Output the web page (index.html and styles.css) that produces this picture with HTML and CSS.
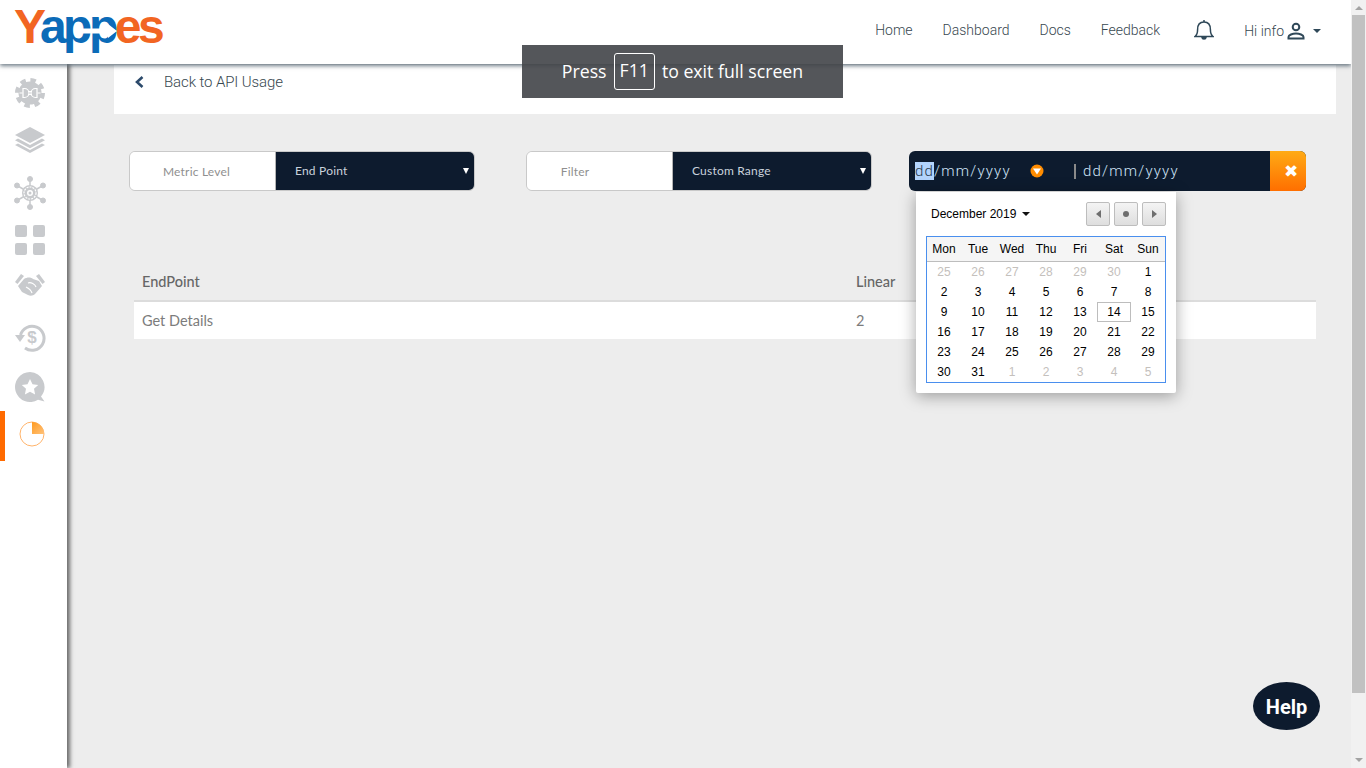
FILE: index.html
```html
<!DOCTYPE html>
<html lang="en">
<head>
    <meta charset="UTF-8">
    <title>Yappes - API Usage</title>
    <link rel="stylesheet" href="styles.css">
</head>
<body>
    <div class="page">
        <!-- Top Navigation -->
        <header class="topbar">
            <a class="logo">
                <span class="logo-y">Y</span><span class="logo-app">app</span><span class="logo-es">es</span>
                <svg class="logo-arrow" width="46" height="14" viewBox="0 0 46 14">
                    <path d="M0 4.500h34V0l9 7-9 7V9.500H0z" fill="#fff"/>
                </svg>
            </a>
            <nav class="topnav">
                <a>Home</a>
                <a>Dashboard</a>
                <a>Docs</a>
                <a>Feedback</a>
            </nav>
            <svg class="bell" width="20" height="22" viewBox="0 0 20 22" fill="none" stroke="#2f4858" stroke-width="1.5">
                <path d="M1 17.500c2-1.500 2.600-3.500 2.600-7C3.600 6 6 3 10 3s6.400 3 6.400 7.500c0 3.500.6 5.500 2.600 7z"/>
                <path d="M10 1v2"/>
                <path d="M8 18.500c.2 2 3.800 2 4 0z" fill="#2f4858"/>
            </svg>
            <div class="user-menu">
                <span>Hi info</span>
                <svg width="20" height="18" viewBox="0 0 20 18" fill="none" stroke="#2f4858" stroke-width="2">
                    <circle cx="10" cy="5" r="3.300"/>
                    <path d="M2.500 16.500v-1.500c0-2 4-3.500 7.500-3.500s7.500 1.500 7.500 3.500v1.500z"/>
                </svg>
                <i class="caret"></i>
            </div>
        </header>

        <div class="body-row">
            <!-- Sidebar -->
            <aside class="sidebar">
                <div class="side-item h-gear">
                    <svg width="30" height="30" viewBox="0 0 30 30">
                        <circle cx="15" cy="15" r="11.500" fill="#c8cacd"/>
                        <circle cx="15" cy="15" r="12.500" fill="none" stroke="#c8cacd" stroke-width="5" stroke-dasharray="5.300 4.520"/>
                        <path d="M4.500 15h3M22.500 15h3M13 13.500h4M13 16.500h4" stroke="#fff" stroke-width="1.200" fill="none"/>
                        <path d="M8 10.500h1.500a4.500 4.500 0 0 1 0 9H8zM22 10.500h-1.500a4.500 4.500 0 0 0 0 9H22z" fill="none" stroke="#fff" stroke-width="1.200"/>
                    </svg>
                </div>
                <div class="side-item h-layers">
                    <svg width="30" height="26" viewBox="0 0 30 26" fill="#c8cacd">
                        <path d="M15 0l15 8-15 8L0 8z"/>
                        <path d="M3 11.500l12 6.500 12-6.500 3 1.800-15 8-15-8z"/>
                        <path d="M3 16.500l12 6.500 12-6.500 3 1.500-15 8-15-8z"/>
                    </svg>
                </div>
                <div class="side-item h-network">
                    <svg width="32" height="34" viewBox="0 0 32 34" fill="#c8cacd" stroke="#c8cacd">
                        <path d="M16 3v28M3 9.500l26 15M29 9.500l-26 15" stroke-width="1.500"/>
                        <circle cx="16" cy="3" r="2.500"/>
                        <circle cx="16" cy="31" r="2.500"/>
                        <circle cx="3" cy="9.500" r="2.500"/>
                        <circle cx="29" cy="9.500" r="2.500"/>
                        <circle cx="3" cy="24.500" r="2.500"/>
                        <circle cx="29" cy="24.500" r="2.500"/>
                        <circle cx="16" cy="17" r="8" fill="#c8cacd" stroke="none"/>
                        <circle cx="16" cy="17" r="6" fill="none" stroke="#fff" stroke-width="1.200" stroke-dasharray="2 1"/>
                        <circle cx="16" cy="17" r="3" fill="#fff" stroke="none"/>
                        <circle cx="16" cy="17" r="1.500" stroke="none"/>
                    </svg>
                </div>
                <div class="side-item h-grid">
                    <div class="tiles"><i></i><i></i><i></i><i></i></div>
                </div>
                <div class="side-item h-hands">
                    <svg width="30" height="22" viewBox="0 0 30 22" fill="#c8cacd">
                        <path d="M6 0l3 2-6.500 8L0 8z"/>
                        <path d="M24 0l6 8-2.500 2L21 2z"/>
                        <path d="M9 5c3-2 7-2 9 0l6 2 3 5-7 8c-2 2-5 2-7 1l-6-3-4-6z"/>
                        <path d="M13 9c3-1 7 1 8 4M11 13c2 1 5 3 6 6" fill="none" stroke="#fff" stroke-width="1.200"/>
                    </svg>
                </div>
                <div class="side-item h-refund">
                    <svg width="32" height="32" viewBox="0 0 32 32" fill="none" stroke="#c8cacd" stroke-width="3">
                        <path d="M6.500 14A12 12 0 1 1 11 27"/>
                        <path d="M1 14h10l-5 7z" fill="#c8cacd" stroke="none"/>
                        <text class="refund-sign" x="18" y="22" text-anchor="middle">$</text>
                    </svg>
                </div>
                <div class="side-item h-review">
                    <svg width="30" height="30" viewBox="0 0 30 30">
                        <path fill="#c8cacd" d="M15 0a15 15 0 1 0 8 27.700l6.500 1.800-3.500-5A15 15 0 0 0 15 0z"/>
                        <path fill="#fff" d="M15 7l2.500 5.200 5.700.7-4.200 3.900 1.100 5.700-5.100-2.800-5.100 2.800 1.100-5.700-4.200-3.900 5.700-.7z"/>
                    </svg>
                </div>
                <div class="side-item h-usage active">
                    <svg width="26" height="26" viewBox="0 0 26 26">
                        <defs>
                            <linearGradient id="usage-fill" x1="0" y1="0" x2="1" y2="1">
                                <stop offset="0" stop-color="#ff9a1f"/>
                                <stop offset="1" stop-color="#ffc27a"/>
                            </linearGradient>
                        </defs>
                        <circle cx="13" cy="13" r="12" fill="none" stroke="#ffb46b" stroke-width="1"/>
                        <path d="M13 1a12 12 0 0 1 12 12H13z" fill="url(#usage-fill)"/>
                    </svg>
                </div>
            </aside>

            <!-- Main Content -->
            <main class="content">
                <div class="back-bar">
                    <svg width="9" height="12" viewBox="0 0 9 12" fill="none" stroke="#2c4a6b" stroke-width="2.600"><path d="M7.500 1L2 6l5.500 5"/></svg>
                    <span>Back to API Usage</span>
                </div>

                <div class="filters">
                    <div class="picker picker-metric">
                        <div class="picker-label">Metric Level</div>
                        <div class="picker-value">End Point<i class="arrow"></i></div>
                    </div>
                    <div class="picker picker-filter">
                        <div class="picker-label">Filter</div>
                        <div class="picker-value">Custom Range<i class="arrow"></i></div>
                    </div>
                    <div class="range">
                        <div class="range-from"><span class="sel">dd</span>/mm/yyyy</div>
                        <svg class="range-toggle" width="14" height="14" viewBox="0 0 14 14">
                            <circle cx="7" cy="7" r="6.500" fill="#ff8c00"/>
                            <path d="M3 4.500h8L7 10.500z" fill="#fff"/>
                        </svg>
                        <div class="range-sep"></div>
                        <div class="range-to">dd/mm/yyyy</div>
                        <button class="range-clear">✖</button>

                        <!-- Calendar Popup -->
                        <div class="cal">
                            <div class="cal-head">
                                <div class="cal-month">December 2019<i class="caret caret-dark"></i></div>
                                <div class="cal-btns">
                                    <button><i class="tri-left"></i></button>
                                    <button><i class="dot"></i></button>
                                    <button><i class="tri-right"></i></button>
                                </div>
                            </div>
                            <table class="cal-grid">
                                <thead>
                                    <tr><th>Mon</th><th>Tue</th><th>Wed</th><th>Thu</th><th>Fri</th><th>Sat</th><th>Sun</th></tr>
                                </thead>
                                <tbody>
                                    <tr><td class="off">25</td><td class="off">26</td><td class="off">27</td><td class="off">28</td><td class="off">29</td><td class="off">30</td><td>1</td></tr>
                                    <tr><td>2</td><td>3</td><td>4</td><td>5</td><td>6</td><td>7</td><td>8</td></tr>
                                    <tr><td>9</td><td>10</td><td>11</td><td>12</td><td>13</td><td class="today">14</td><td>15</td></tr>
                                    <tr><td>16</td><td>17</td><td>18</td><td>19</td><td>20</td><td>21</td><td>22</td></tr>
                                    <tr><td>23</td><td>24</td><td>25</td><td>26</td><td>27</td><td>28</td><td>29</td></tr>
                                    <tr><td>30</td><td>31</td><td class="off">1</td><td class="off">2</td><td class="off">3</td><td class="off">4</td><td class="off">5</td></tr>
                                </tbody>
                            </table>
                        </div>
                    </div>
                </div>

                <table class="usage">
                    <thead>
                        <tr><th class="col-name">EndPoint</th><th>Linear</th></tr>
                    </thead>
                    <tbody>
                        <tr><td>Get Details</td><td>2</td></tr>
                    </tbody>
                </table>
            </main>
        </div>
    </div>

    <!-- Scrollbar -->
    <div class="scrollbar">
        <i class="sb-up"></i>
        <div class="sb-thumb"></div>
        <i class="sb-down"></i>
    </div>

    <div class="fs-notice">Press <span class="key">F11</span> to exit full screen</div>
    <div class="help">Help</div>
</body>
</html>
```
FILE: styles.css
```css
html, body {
    margin: 0;
    padding: 0;
    height: 100%;
    overflow: hidden;
}

body {
    display: flex;
    font-family: Roboto, sans-serif;
    background: #ededed;
}

.page {
    flex: 1;
    min-width: 0;
    display: flex;
    flex-direction: column;
    height: 768px;
}

/* Top navigation */
.topbar {
    height: 64px;
    flex: none;
    display: flex;
    align-items: center;
    background: #fff;
    box-shadow: 0 2px 4px rgba(40, 60, 75, 0.65);
    position: relative;
    z-index: 3;
}

.logo {
    margin-left: 14px;
    margin-top: -10px;
    font-family: "Liberation Sans", sans-serif;
    font-size: 48px;
    font-weight: bold;
    letter-spacing: -3.500px;
    line-height: 1;
    position: relative;
    white-space: nowrap;
}

.logo-y, .logo-es { color: #f26522; }
.logo-app { color: #0b6bb8; }

.logo-arrow {
    position: absolute;
    left: 60px;
    top: 21px;
}

.topnav {
    margin-left: auto;
    margin-top: -4px;
    display: flex;
    gap: 30px;
    font-size: 14px;
    font-weight: 300;
    color: #37474f;
}

.bell { margin-left: 34px; margin-top: -4px; }

.user-menu {
    display: flex;
    align-items: center;
    margin-left: 30px;
    margin-right: 30px;
    margin-top: -2px;
    font-size: 14px;
    font-weight: 300;
    color: #37474f;
}

.user-menu svg { margin-left: 2px; }

.caret {
    display: inline-block;
    width: 0;
    height: 0;
    margin-left: 7px;
    border-left: 4px solid transparent;
    border-right: 4px solid transparent;
    border-top: 4px solid #2f4858;
}

/* Sidebar */
.body-row {
    flex: 1;
    display: flex;
    min-height: 0;
}

.sidebar {
    width: 67px;
    flex: none;
    display: flex;
    flex-direction: column;
    background: #fff;
    box-shadow: 3px 0 4px rgba(0, 0, 0, 0.55);
    position: relative;
    z-index: 2;
    padding-top: 14px;
    box-sizing: border-box;
}

.side-item {
    display: flex;
    justify-content: center;
    align-items: center;
    padding-right: 7px;
    position: relative;
}

.h-gear { height: 30px; }
.h-layers { height: 26px; margin-top: 19px; }
.h-network { height: 34px; margin-top: 23px; }
.h-grid { height: 30px; margin-top: 15px; }
.h-hands { height: 22px; margin-top: 19px; }
.h-refund { height: 32px; margin-top: 25px; }
.h-review { height: 30px; margin-top: 19px; }
.h-usage { height: 26px; margin-top: 19px; padding-right: 3px; }

.side-item.active::before {
    content: "";
    position: absolute;
    left: 0;
    top: -10px;
    width: 5px;
    height: 50px;
    background: #ff6a00;
}

.tiles {
    display: grid;
    grid-template-columns: 12px 12px;
    grid-auto-rows: 12px;
    gap: 6px;
}

.tiles i {
    background: #c8cacd;
    border-radius: 2px;
}

.refund-sign {
    font-family: "Liberation Sans", sans-serif;
    font-size: 17px;
    font-weight: bold;
    fill: #c8cacd;
    stroke: none;
}

/* Main content */
.content {
    flex: 1;
    min-width: 0;
    padding: 1px 15px 0 47px;
    position: relative;
}

.back-bar {
    height: 49px;
    display: flex;
    align-items: center;
    gap: 20px;
    padding: 0 0 15px 21px;
    box-sizing: border-box;
    background: #fff;
    font-size: 15px;
    font-weight: 300;
    letter-spacing: -0.100px;
    color: #37474f;
}

.filters {
    display: flex;
    align-items: flex-start;
    margin-top: 37px;
    padding-left: 15px;
}

.picker {
    display: flex;
    width: 346px;
    height: 40px;
    box-sizing: border-box;
    border: 1px solid #c9c9c9;
    border-radius: 6px;
    overflow: hidden;
    font-family: Lato, sans-serif;
    font-size: 12px;
    letter-spacing: 0.200px;
}

.picker-filter { margin-left: 51px; }

.picker-label {
    width: 146px;
    flex: none;
    background: #fff;
    color: #8f8f8f;
    border-right: 1px solid #b5b5b5;
    text-align: center;
    line-height: 39px;
    box-sizing: border-box;
    padding-right: 12px;
}

.picker-filter .picker-label {
    padding-right: 49px;
}

.picker-value {
    flex: 1;
    background: #0d1b2e;
    color: #c9d2dc;
    font-weight: 400;
    line-height: 37px;
    padding-left: 19px;
    position: relative;
}

.arrow {
    position: absolute;
    right: 5px;
    top: 16px;
    border-left: 3px solid transparent;
    border-right: 3px solid transparent;
    border-top: 6px solid #fff;
}

.range {
    margin-left: 37px;
    width: 397px;
    height: 40px;
    display: flex;
    align-items: center;
    background: #0d1b2e;
    border-radius: 6px;
    position: relative;
    color: #cfe3f7;
    font-size: 15px;
    font-weight: 300;
    letter-spacing: 1.200px;
}

.range-from { margin-left: 6px; width: 115px; }

.sel {
    background: #b3d4fc;
    color: #2a3a4d;
}

.range-sep {
    width: 2px;
    height: 15px;
    margin-left: 30px;
    background: #8a8a8a;
}

.range-toggle { flex: none; }

.range-to { margin-left: 7px; }

.range-clear {
    margin-left: auto;
    width: 36px;
    height: 40px;
    border: none;
    padding: 0 0 0 5px;
    background: linear-gradient(#ffab14, #ff6f00);
    border-radius: 0 6px 6px 0;
    color: #fff;
    font-size: 17px;
}

/* Calendar popup */
.cal {
    position: absolute;
    left: 7px;
    top: 41px;
    width: 260px;
    height: 201px;
    background: #fff;
    border-radius: 0 0 2px 2px;
    box-shadow: 0 3px 16px rgba(0, 0, 0, 0.35);
    font-family: "Liberation Sans", sans-serif;
    font-size: 12px;
    letter-spacing: 0;
    font-weight: 400;
    color: #000;
    padding: 10px 10px 0 10px;
    box-sizing: border-box;
}

.cal-head {
    display: flex;
    align-items: center;
    justify-content: space-between;
    height: 24px;
    padding-left: 5px;
}

.caret-dark {
    border-top-color: #111;
    margin-left: 6px;
    vertical-align: 2px;
}

.cal-btns {
    display: flex;
    gap: 4px;
}

.cal-btns button {
    width: 24px;
    height: 24px;
    padding: 0;
    border: 1px solid #bdbdbd;
    border-radius: 2px;
    background: linear-gradient(#f4f4f4, #dedede);
    display: flex;
    align-items: center;
    justify-content: center;
}

.tri-left {
    border-top: 4px solid transparent;
    border-bottom: 4px solid transparent;
    border-right: 5px solid #6e6e6e;
}

.tri-right {
    border-top: 4px solid transparent;
    border-bottom: 4px solid transparent;
    border-left: 5px solid #6e6e6e;
}

.dot {
    width: 6px;
    height: 6px;
    border-radius: 50%;
    background: #6e6e6e;
}

.cal-grid {
    margin-top: 10px;
    width: 240px;
    border: 1px solid #4a8fee;
    border-collapse: separate;
    border-spacing: 0;
    table-layout: fixed;
}

.cal-grid th {
    height: 24px;
    padding: 0;
    background: #f5f5f5;
    border-bottom: 1px solid #bdbdbd;
    font-weight: 400;
}

.cal-grid td {
    height: 20px;
    padding: 0;
    text-align: center;
    box-sizing: border-box;
}

.cal-grid td.off { color: #c4c0bc; }
.cal-grid td.today { border: 1px solid #bdbdbd; }

/* Usage table */
.usage {
    width: 1182px;
    margin: 72px 0 0 20px;
    border-collapse: collapse;
    table-layout: fixed;
    font-family: Lato, sans-serif;
    font-size: 14.500px;
    color: #7c7c7c;
}

.usage th {
    height: 37px;
    text-align: left;
    padding: 0 8px;
    font-weight: 500;
    border-bottom: 2px solid #dcdcdc;
    color: #666;
}

.col-name { width: 698px; }

.usage td {
    height: 37px;
    padding: 0 8px;
    background: #fff;
    font-weight: 400;
}

/* Fake browser bits */
.scrollbar {
    width: 15px;
    flex: none;
    height: 768px;
    background: #f1f1f1;
    display: flex;
    flex-direction: column;
    align-items: center;
    position: relative;
    z-index: 4;
}

.sb-up, .sb-down {
    flex: none;
    width: 0;
    height: 0;
    border-left: 4px solid transparent;
    border-right: 4px solid transparent;
}

.sb-up { margin: 6px 0 5px; border-bottom: 4px solid #a3a3a3; }
.sb-down { margin-top: 65px; border-top: 4px solid #a3a3a3; }

.sb-thumb {
    width: 13px;
    height: 678px;
    flex: none;
    background: #c1c1c1;
}

.fs-notice {
    position: absolute;
    left: 522px;
    top: 45px;
    width: 321px;
    height: 53px;
    box-sizing: border-box;
    padding-bottom: 2px;
    display: flex;
    align-items: center;
    justify-content: center;
    gap: 7px;
    background: rgba(65, 68, 72, 0.9);
    color: #fff;
    font-family: "Open Sans", sans-serif;
    font-size: 17.700px;
    z-index: 10;
}

.key {
    border: 1px solid #fff;
    border-radius: 3px;
    padding: 0 5px 2px;
    margin-top: 2px;
    line-height: 33px;
}

.help {
    position: fixed;
    left: 1253px;
    top: 682px;
    width: 67px;
    height: 48px;
    box-sizing: border-box;
    padding-top: 2px;
    border-radius: 50%;
    background: #0d1b2e;
    color: #fff;
    font-size: 20px;
    font-weight: 700;
    display: flex;
    align-items: center;
    justify-content: center;
    z-index: 5;
}
```
